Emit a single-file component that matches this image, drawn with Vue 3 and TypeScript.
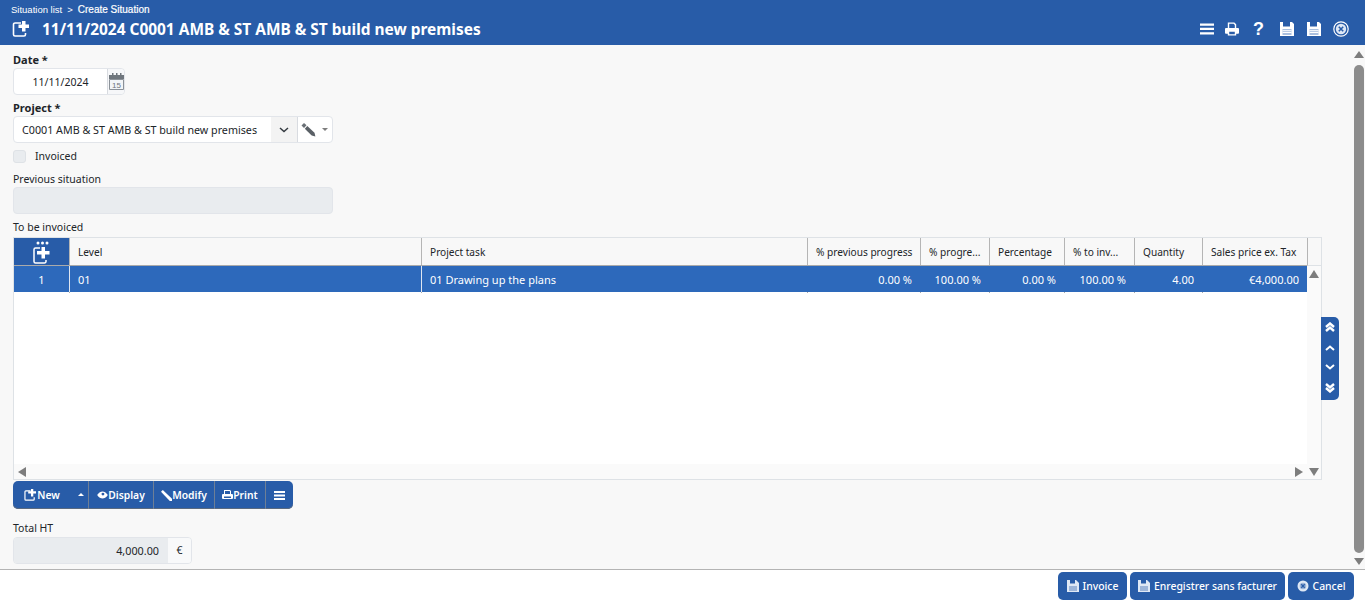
<script setup lang="ts">
interface Column { label: string; value: string; width: number; right: boolean }
const columns: Column[] = [
  { label: 'Level', value: '01', width: 352, right: false },
  { label: 'Project task', value: '01 Drawing up the plans', width: 386, right: false },
  { label: '% previous progress', value: '0.00 %', width: 113, right: true },
  { label: '% progre...', value: '100.00 %', width: 69, right: true },
  { label: 'Percentage', value: '0.00 %', width: 75, right: true },
  { label: '% to inv...', value: '100.00 %', width: 70, right: true },
  { label: 'Quantity', value: '4.00', width: 68, right: true },
  { label: 'Sales price ex. Tax', value: '€4,000.00', width: 105, right: true },
]
const floppy = 'M1 1h11l1 0 2 2v12H1z'
</script>

<template>
  <div class="page">
    <header class="top">
      <div class="crumbs"><span>Situation list</span><span class="sep">&gt;</span><span class="current">Create Situation</span></div>
      <div class="titlebar">
        <svg class="title-icon" viewBox="0 0 18 18" width="18" height="18">
          <path d="M9 3H3a1.500 1.500 0 0 0-1.500 1.500v10A1.500 1.500 0 0 0 3 16h9a1.500 1.500 0 0 0 1.500-1.500V13" fill="none" stroke="#fff" stroke-width="1.600"/>
          <path d="M10 1h3.500v3.500H17V8h-3.500v3.500H10V8H6.500V4.500H10z" fill="#fff"/>
        </svg>
        <h1>11/11/2024 C0001 AMB &amp; ST AMB &amp; ST build new premises</h1>
        <div class="top-actions">
          <svg viewBox="0 0 15 14" width="14" height="14"><path d="M0 1h15v2.500H0zM0 5.700h15v2.500H0zM0 10.500h15V13H0z" fill="#fff"/></svg>
          <svg class="a-print" viewBox="0 0 15 14" width="14" height="14"><path d="M3 6V0h7l2 2v4h2a1 1 0 0 1 1 1v4a1 1 0 0 1-1 1h-2v2H3v-2H1a1 1 0 0 1-1-1V7a1 1 0 0 1 1-1z" fill="#fff"/><path d="M4.500 1.500h4.700l1.300 1.300V6h-6zM4.500 10h6v2.500h-6z" fill="#285ca8"/></svg>
          <span class="help">?</span>
          <svg class="a-save" viewBox="0 0 16 16" width="16" height="16"><path :d="floppy" fill="#fff"/><path d="M4 1h7v4.500H4z" fill="#285ca8"/><path d="M3.500 8h9v6h-9z" fill="#a9bfdf"/><path d="M3.500 9.700h9M3.500 11.500h9" stroke="#fff"/></svg>
          <svg viewBox="0 0 16 16" width="16" height="16"><path :d="floppy" fill="#fff"/><path d="M4 1h7v4.500H4z" fill="#285ca8"/><path d="M3.500 8h9v6h-9z" fill="#a9bfdf"/><path d="M3.500 9.700h9M3.500 11.500h9" stroke="#fff"/></svg>
          <svg viewBox="0 0 16 16" width="16" height="16"><circle cx="8" cy="8" r="7.200" fill="none" stroke="#fff" stroke-width="1.200"/><circle cx="8" cy="8" r="5.200" fill="#dfe8f5"/><path d="M5.800 5.800l4.400 4.400M10.200 5.800l-4.400 4.400" stroke="#285ca8" stroke-width="1.600"/></svg>
        </div>
      </div>
    </header>

    <div class="middle">
      <main class="form">
        <label class="lbl strong first">Date *</label>
        <div class="date-field">
          <span class="date-value">11/11/2024</span>
          <span class="date-btn">
            <svg viewBox="0 0 15 17" width="15" height="17"><path d="M0 2h15v4H0z" fill="#6f767d"/><path d="M3 0h1.500v3H3zM7 0h1.500v3H7zM11 0h1.500v3H11z" fill="#6f767d"/><path d="M.5 6.500h14v10H.5z" fill="#f3f5f7" stroke="#8b9198"/><text x="7.500" y="15" text-anchor="middle" class="cal-num">15</text></svg>
          </span>
        </div>

        <label class="lbl strong project-lbl">Project *</label>
        <div class="project-field">
          <span class="project-value">C0001 AMB &amp; ST AMB &amp; ST build new premises</span>
          <span class="project-arrow">
            <svg viewBox="0 0 10 6" width="10" height="6"><path d="M1 1l4 3.500L9 1" fill="none" stroke="#343a40" stroke-width="1.500"/></svg>
          </span>
          <span class="project-edit">
            <svg viewBox="0 0 16 16" width="16" height="16"><path d="M.5 3.500L3 1l2.500 2.300L3 6z" fill="#6a7076"/><path d="M3.800 6.700L6.300 4l7.200 6.800.9 3.700-3.700-1z" fill="#5a6066"/></svg>
            <i class="caret"></i>
          </span>
        </div>

        <div class="check-row">
          <span class="check"></span>
          <span class="check-text">Invoiced</span>
        </div>

        <label class="lbl prev-lbl">Previous situation</label>
        <div class="disabled-input"></div>

        <label class="lbl table-lbl">To be invoiced</label>
        <div class="grid-row">
          <div class="grid">
            <div class="grid-main">
              <div class="thead">
                <div class="corner">
                  <svg viewBox="0 0 20 24" width="20" height="24">
                    <circle cx="6" cy="2" r="1.500" fill="#fff"/><circle cx="10.500" cy="2" r="1.500" fill="#fff"/><circle cx="15" cy="2" r="1.500" fill="#fff"/>
                    <path d="M8 7H3.500A1.500 1.500 0 0 0 2 8.500v12A1.500 1.500 0 0 0 3.500 22h9a1.500 1.500 0 0 0 1.500-1.500V19" fill="none" stroke="#fff" stroke-width="1.500"/>
                    <path d="M9.500 6h3.500v4h4.500v3.500H13v4H9.500v-4H5V10h4.500z" fill="#fff"/>
                  </svg>
                </div>
                <div v-for="c in columns" :key="c.label" class="th" :style="{ width: c.width + 'px' }">{{ c.label }}</div>
              </div>
              <div class="tbody-row">
                <div class="rownum">1</div>
                <div v-for="c in columns" :key="c.label" class="td" :class="{ right: c.right }" :style="{ width: c.width + 'px' }">{{ c.value }}</div>
              </div>
              <div class="tbody-empty"></div>
              <div class="hscroll">
                <svg viewBox="0 0 8 10" width="8" height="10"><path d="M8 0v10L0 5z" fill="#7d7d7d"/></svg>
                <svg viewBox="0 0 8 10" width="8" height="10"><path d="M0 0v10l8-5z" fill="#7d7d7d"/></svg>
              </div>
            </div>
            <div class="vscroll">
              <div class="vscroll-head"></div>
              <svg viewBox="0 0 10 8" width="10" height="8"><path d="M5 0l5 8H0z" fill="#7d7d7d"/></svg>
              <svg viewBox="0 0 10 8" width="10" height="8"><path d="M5 8l5-8H0z" fill="#7d7d7d"/></svg>
            </div>
          </div>
          <nav class="side-nav">
            <svg viewBox="0 0 10 10" width="10" height="10"><path d="M1 5l4-3.500L9 5M1 9l4-3.500L9 9" fill="none" stroke="#fff" stroke-width="2.400"/></svg>
            <svg viewBox="0 0 10 6" width="10" height="6"><path d="M1 5l4-3.500L9 5" fill="none" stroke="#fff" stroke-width="2"/></svg>
            <svg viewBox="0 0 10 6" width="10" height="6"><path d="M1 1l4 3.500L9 1" fill="none" stroke="#fff" stroke-width="2"/></svg>
            <svg viewBox="0 0 10 10" width="10" height="10"><path d="M1 1l4 3.500L9 1M1 5l4 3.500L9 5" fill="none" stroke="#fff" stroke-width="2.400"/></svg>
          </nav>
        </div>

        <div class="toolbar">
          <button class="tb new">
            <svg viewBox="0 0 14 13" width="13" height="12"><path d="M7 2H2a1 1 0 0 0-1 1v8a1 1 0 0 0 1 1h8a1 1 0 0 0 1-1V9" fill="none" stroke="#fff" stroke-width="1.300"/><path d="M7.500 0H10v2.500h3V5h-3v3H7.500V5h-3V2.500h3z" fill="#fff"/></svg>New
          </button>
          <button class="tb up"><i class="caret-up"></i></button>
          <button class="tb display">
            <svg viewBox="0 0 12 9" width="11" height="8"><path d="M0 4.500C2 1.500 4 .5 6 .5s4 1 6 4C10 7.500 8 8.500 6 8.500s-4-1-6-4z" fill="#fff"/><circle cx="6.500" cy="3.500" r="1.600" fill="#285ca8"/></svg>Display
          </button>
          <button class="tb modify">
            <svg viewBox="0 0 11 11" width="11" height="11"><path d="M0 1.800L1.800 0 11 8.800V11H8.800z" fill="#fff"/></svg>Modify
          </button>
          <button class="tb print">
            <svg viewBox="0 0 11 10" width="11" height="10"><path d="M2 4V0h6l1 1v3h1a1 1 0 0 1 1 1v3a1 1 0 0 1-1 1H9H2H1a1 1 0 0 1-1-1V5a1 1 0 0 1 1-1z" fill="#fff"/><path d="M3 1h4.600l.4.400V4H3zM2 6.500h7V8H2z" fill="#285ca8"/></svg>Print
          </button>
          <button class="tb burger">
            <svg viewBox="0 0 11 9" width="11" height="9"><path d="M0 0h11v2H0zM0 3.500h11v2H0zM0 7h11v2H0z" fill="#fff"/></svg>
          </button>
        </div>

        <label class="lbl total-lbl">Total HT</label>
        <div class="total">
          <span class="total-value">4,000.00</span>
          <span class="total-cur">€</span>
        </div>
      </main>

      <aside class="page-scroll">
        <svg viewBox="0 0 10 7" width="10" height="7"><path d="M5 0l5 7H0z" fill="#7d7d7d"/></svg>
        <div class="thumb"></div>
        <svg viewBox="0 0 10 7" width="10" height="7"><path d="M5 7l5-7H0z" fill="#7d7d7d"/></svg>
      </aside>
    </div>

    <footer class="bottom">
      <button class="fbtn">
        <svg viewBox="0 0 12 12" width="12" height="12"><path d="M0 0h9l3 3v9H0z" fill="#dfe8f5"/><path d="M3 0h5v3.500H3z" fill="#285ca8"/><path d="M2 6h8v5H2z" fill="#9db5d9"/></svg>Invoice
      </button>
      <button class="fbtn">
        <svg viewBox="0 0 12 12" width="12" height="12"><path d="M0 0h9l3 3v9H0z" fill="#dfe8f5"/><path d="M3 0h5v3.500H3z" fill="#285ca8"/><path d="M2 6h8v5H2z" fill="#9db5d9"/></svg>Enregistrer sans facturer
      </button>
      <button class="fbtn">
        <svg viewBox="0 0 12 12" width="12" height="12"><circle cx="6" cy="6" r="5.500" fill="#dfe8f5"/><circle cx="6" cy="6" r="3.300" fill="#9db5d9"/><path d="M4.300 4.300l3.400 3.400M7.700 4.300L4.300 7.700" stroke="#285ca8" stroke-width="1.300"/></svg>Cancel
      </button>
    </footer>
  </div>
</template>

<style>
html, body { margin: 0; padding: 0; background: #fff; }
</style>

<style scoped>
.page {
  width: 1365px;
  height: 602px;
  display: flex;
  flex-direction: column;
  overflow: hidden;
  font-family: "Noto Sans", "DejaVu Sans", sans-serif;
  font-size: 10.500px;
  color: #212529;
}
.top {
  height: 45px;
  flex: none;
  background: #285ca8;
  color: #fff;
  box-sizing: border-box;
  padding: 4px 16px 0 11px;
}
.crumbs {
  font-family: "Liberation Sans", sans-serif;
  font-size: 9.500px;
  line-height: 11px;
  display: flex;
  gap: 5px;
}
.current { font-size: 10px; font-weight: 400; -webkit-text-stroke: 0.2px #fff; }
.titlebar { display: flex; align-items: center; height: 26px; margin-top: 1px; }
.title-icon { margin-left: 1px; }
h1 {
  margin: 0 0 0 12px;
  font-size: 15.450px;
  font-weight: 700;
  font-family: "Noto Sans", sans-serif;
  white-space: nowrap;
}
.top-actions { margin-left: auto; display: flex; align-items: center; gap: 11px; }
.a-print { margin-right: 3px; }
.a-save { margin-left: 5px; }
.help { font: 700 18px/16px "Liberation Sans", sans-serif; width: 10px; text-align: center; }

.middle { height: 524px; flex: none; display: flex; background: #f8f8f8; }
.form { flex: 1; min-width: 0; box-sizing: border-box; padding: 0 13px; display: flex; flex-direction: column; align-items: flex-start; }
.lbl { display: block; line-height: 14px; }
.strong { font-weight: 700; font-size: 11px; }
.first { margin-top: 8px; }
.date-field {
  margin-top: 1px;
  width: 112px; height: 27px;
  box-sizing: border-box;
  border: 1px solid #e2e5ea;
  border-radius: 4px;
  background: #fff;
  display: flex;
}
.date-value { flex: 1; text-align: center; line-height: 26px; }
.date-btn { width: 17px; border-left: 1px solid #d8dbe0; background: #f6f7f9; display: flex; align-items: center; padding-left: 1px; box-sizing: border-box; border-radius: 0 4px 4px 0; }
.cal-num { font: 8px "Liberation Sans", sans-serif; fill: #6f767d; }

.project-lbl { margin-top: 6px; }
.project-field {
  margin-top: 1px;
  width: 320px; height: 27px;
  box-sizing: border-box;
  border: 1px solid #e2e5ea;
  border-radius: 4px;
  background: #fff;
  display: flex;
}
.project-value { width: 257px; padding-left: 8px; box-sizing: border-box; line-height: 26px; white-space: nowrap; font-size: 10.730px; }
.project-arrow { width: 27px; box-sizing: border-box; background: #f3f3f3; border-right: 1px solid #d8dbe0; display: flex; align-items: center; justify-content: center; }
.project-edit { flex: 1; display: flex; align-items: center; padding-left: 3px; gap: 5px; }
.caret { width: 0; height: 0; border-left: 3px solid transparent; border-right: 3px solid transparent; border-top: 3px solid #7d7d7d; }

.check-row { margin-top: 5px; display: flex; align-items: center; gap: 9px; height: 16px; }
.check { width: 13px; height: 13px; box-sizing: border-box; background: #e9ecef; border: 1px solid #dee2e6; border-radius: 3px; }
.prev-lbl { margin-top: 8px; }
.disabled-input { margin-top: 1px; width: 320px; height: 27px; box-sizing: border-box; background: #e9ecef; border: 1px solid #e2e5ea; border-radius: 4px; }
.table-lbl { margin-top: 6px; }

.grid-row { margin-top: 3px; display: flex; align-items: center; }
.grid { width: 1309px; height: 243px; box-sizing: border-box; border: 1px solid #dee2e6; background: #fff; display: flex; }
.grid-main { width: 1293px; display: flex; flex-direction: column; }
.thead { display: flex; height: 28px; box-sizing: border-box; background: #f8f8f8; border-bottom: 1px solid #aaa; }
.corner { width: 55px; flex: none; background: #285ca8; display: flex; align-items: center; justify-content: center; padding-top: 2px; box-sizing: border-box; overflow: hidden; }
.th { flex: none; box-sizing: border-box; padding-left: 8px; line-height: 28px; border-left: 1px solid #b5b5b5; white-space: nowrap; overflow: hidden; font-size: 10.150px; }
.tbody-row { display: flex; height: 27px; background: linear-gradient(#2d69bb 26px, #fff 26px); color: #fff; font-size: 11px; }
.rownum { width: 55px; flex: none; text-align: center; line-height: 27px; }
.td { flex: none; box-sizing: border-box; padding: 0 8px; line-height: 27px; border-left: 1px solid #dfe6f1; white-space: nowrap; position: relative; }
.td:nth-of-type(n+4) { border-left-color: #2d69bb; }
.td::after { content: ""; position: absolute; left: -1px; bottom: 0; width: 1px; height: 1px; background: #aaa; }
.right { text-align: right; }
.tbody-empty { flex: 1; }
.hscroll { height: 15px; flex: none; background: #fafafa; display: flex; justify-content: space-between; align-items: center; padding: 0 4px; }
.vscroll { flex: 1; display: flex; flex-direction: column; align-items: center; background: #fafafa; padding-bottom: 3px; }
.vscroll-head { width: 100%; height: 28px; box-sizing: border-box; background: #f8f8f8; border-left: 1px solid #b5b5b5; border-bottom: 1px solid #dee2e6; margin-bottom: 4px; }
.vscroll svg:last-child { margin-top: auto; }

.side-nav {
  width: 18px; height: 83px;
  margin-left: -1px;
  background: #285ca8;
  border-radius: 0 5px 5px 0;
  display: flex; flex-direction: column; align-items: center; gap: 13px;
  padding-top: 5px;
  box-sizing: border-box;
}

.toolbar { margin-top: 1px; height: 28px; display: flex; background: #285ca8; border-radius: 5px; overflow: hidden; box-shadow: inset 0 -1px 0 #5a6a80; }
button { border: 0; margin: 0; padding: 0; font: inherit; color: #fff; background: #285ca8; }
.tb { display: flex; align-items: center; justify-content: center; font-weight: 600; height: 28px; box-sizing: border-box; border-right: 1px solid #6e7f96; font-size: 10.300px; background: transparent; }
.new { width: 60px; border-right: 0; padding-right: 2px; }
.up { width: 16px; }
.display { width: 65px; }
.modify { width: 61px; }
.print { width: 51px; }
.burger { width: 27px; border-right: 0; }
.caret-up { width: 0; height: 0; border-left: 3px solid transparent; border-right: 3px solid transparent; border-bottom: 3px solid #fff; margin-bottom: 2px; }

.total-lbl { margin-top: 12px; }
.total { margin-top: 2px; width: 179px; height: 27px; box-sizing: border-box; border: 1px solid #e2e5ea; border-radius: 4px; display: flex; overflow: hidden; }
.total-value { width: 154px; box-sizing: border-box; background: #e9ecef; text-align: right; padding-right: 9px; line-height: 25px; font-size: 10.800px; }
.total-cur { flex: 1; background: #f8f9fa; text-align: center; line-height: 24px; }

.page-scroll { width: 13px; flex: none; display: flex; flex-direction: column; align-items: center; padding: 6px 0 4px; box-sizing: border-box; }
.thumb { width: 10px; flex: 1; margin: 7px 0 5px; background: #8c8c8c; border-radius: 5px; }

.bottom { flex: 1; border-top: 1px solid #b4b4b4; background: #fff; display: flex; justify-content: flex-end; gap: 3px; padding: 2px 11px 0 0; }
.fbtn { height: 28px; border-radius: 5px; display: flex; align-items: center; justify-content: center; gap: 4px; font-size: 10.400px; font-weight: 500; }
.fbtn:nth-child(1) { width: 69px; }
.fbtn:nth-child(2) { width: 155px; }
.fbtn:nth-child(3) { width: 66px; }
</style>
